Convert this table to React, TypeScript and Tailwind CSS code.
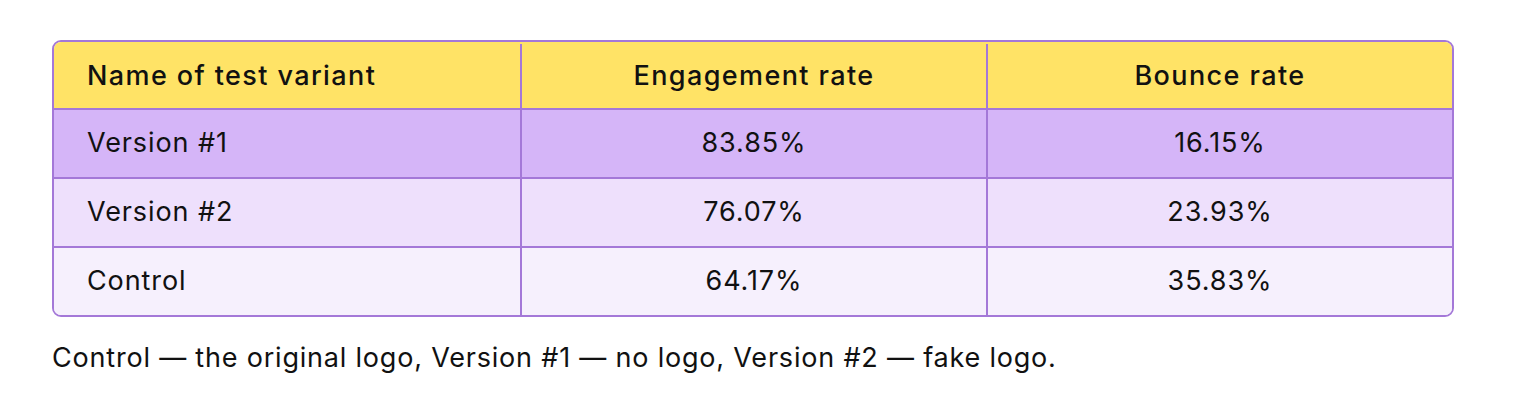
const rows = [
  { name: "Version #1", engagement: "83.85%", bounce: "16.15%", bg: "bg-[#d5b5f8]" },
  { name: "Version #2", engagement: "76.07%", bounce: "23.93%", bg: "bg-[#eee0fc]" },
  { name: "Control", engagement: "64.17%", bounce: "35.83%", bg: "bg-[#f6f0fd]" },
];

export default function App() {
  return (
    <div className="min-h-screen bg-white pl-[52px] pt-[40px] text-[#111] font-['Inter',sans-serif]">
      <div className="w-[1402px] overflow-hidden rounded-[9px] border-2 border-[#a478d8]">
        <div className="grid h-[66px] grid-cols-3 bg-[#ffe366] pt-[2px] text-[27px] font-medium tracking-[1.4px]">
          <div className="flex items-center pl-[33px]">Name of test variant</div>
          <div className="flex items-center justify-center border-l-2 border-[#a478d8]">Engagement rate</div>
          <div className="flex items-center justify-center border-l-2 border-[#a478d8]">Bounce rate</div>
        </div>
        {rows.map((r) => (
          <div key={r.name} className={`grid h-[69px] grid-cols-3 border-t-2 border-[#a478d8] text-[27px] tracking-[0.9px] ${r.bg}`}>
            <div className="flex items-center pl-[33px]">{r.name}</div>
            <div className="flex items-center justify-center border-l-2 border-[#a478d8]">{r.engagement}</div>
            <div className="flex items-center justify-center border-l-2 border-[#a478d8]">{r.bounce}</div>
          </div>
        ))}
      </div>
      <p className="mt-[24px] text-[27px] leading-[34px] tracking-[0.8px]">
        Control — the original logo, Version #1 — no logo, Version #2 — fake logo.
      </p>
    </div>
  );
}
